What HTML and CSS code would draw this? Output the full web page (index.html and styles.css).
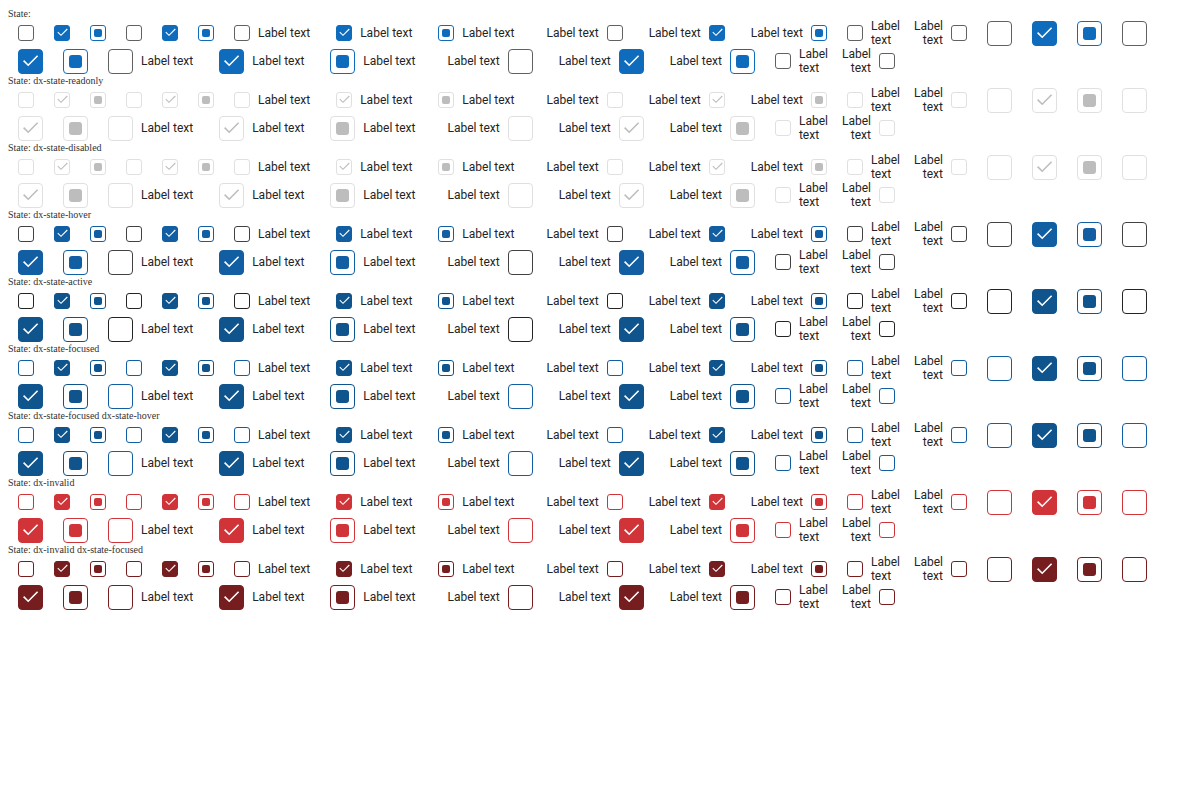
FILE: index.html
```html
<!DOCTYPE html>
<html lang="en">
<head>
  <meta charset="UTF-8">
  <title>CheckBox states</title>
  <link rel="stylesheet" href="styles.css">
</head>
<body>
  <div id="demo"></div>

  <script>
    // States shown, one block each
    var states = [
      { title: 'State:', cls: '' },
      { title: 'State: dx-state-readonly', cls: 'st-readonly' },
      { title: 'State: dx-state-disabled', cls: 'st-disabled' },
      { title: 'State: dx-state-hover', cls: 'st-hover' },
      { title: 'State: dx-state-active', cls: 'st-active' },
      { title: 'State: dx-state-focused', cls: 'st-focused' },
      { title: 'State: dx-state-focused dx-state-hover', cls: 'st-focused' },
      { title: 'State: dx-invalid', cls: 'st-invalid' },
      { title: 'State: dx-invalid dx-state-focused', cls: 'st-invalid-focused' }
    ];

    // size, value, label position
    var items = [
      ['sm', '', ''], ['sm', 'checked', ''], ['sm', 'indeterminate', ''],
      ['sm', '', ''], ['sm', 'checked', ''], ['sm', 'indeterminate', ''],
      ['sm', '', 'after'], ['sm', 'checked', 'after'], ['sm', 'indeterminate', 'after'],
      ['sm', '', 'before'], ['sm', 'checked', 'before'], ['sm', 'indeterminate', 'before'],
      ['sm', '', 'after wrap'], ['sm', '', 'before wrap'],
      ['lg', '', ''], ['lg', 'checked', ''], ['lg', 'indeterminate', ''],
      ['lg', '', ''], ['lg', 'checked', ''], ['lg', 'indeterminate', ''],
      ['lg', '', 'after'], ['lg', 'checked', 'after'], ['lg', 'indeterminate', 'after'],
      ['lg', '', 'before'], ['lg', 'checked', 'before'], ['lg', 'indeterminate', 'before'],
      ['sm', '', 'after wrap'], ['sm', '', 'before wrap']
    ];

    var checkSm = '<svg viewBox="0 0 16 16" width="16" height="16"><polyline points="3.8,7.2 7,10.3 13.3,4" /></svg>';
    var checkLg = '<svg viewBox="0 0 25 25" width="25" height="25"><polyline points="5.6,11.6 10.2,16.2 19.6,6.8" /></svg>';

    var html = '';
    states.forEach(function(s) {
      html += '<section class="state ' + s.cls + '">';
      html += '<div class="state-title">' + s.title + '</div>';
      html += '<div class="items">';
      items.forEach(function(it) {
        html += '<div class="cb ' + it[0] + ' ' + it[1] + ' ' + it[2] + '">';
        html += '<span class="box">';
        if (it[1] === 'checked') html += (it[0] === 'lg' ? checkLg : checkSm);
        html += '</span>';
        if (it[2]) html += '<span class="lbl">Label text</span>';
        html += '</div>';
      });
      html += '</div></section>';
    });
    document.getElementById('demo').innerHTML = html;
  </script>
</body>
</html>
```

FILE: styles.css
```css
/* Page */
body {
  margin: 8px;
  background: #fff;
}
.state-title {
  font-family: "Liberation Serif", serif;
  font-size: 10px;
  line-height: 11px;
  color: #333;
}
/* State colours */
.state {
  --border: #616161;
  --fill: #0f6cbd;
  --fill-border: #0f6cbd;
  --check: #fff;
  --mark: #0f6cbd;
  --mark-border: #0f6cbd;
}
.st-readonly, .st-disabled {
  --border: #e0e0e0;
  --fill: #fff;
  --fill-border: #e0e0e0;
  --check: #bdbdbd;
  --mark: #bdbdbd;
  --mark-border: #e0e0e0;
}
.st-hover {
  --border: #424242;
  --fill: #115ea3;
  --fill-border: #115ea3;
  --mark: #115ea3;
  --mark-border: #115ea3;
}
.st-active {
  --border: #242424;
  --fill: #0f548c;
  --fill-border: #0f548c;
  --mark: #0f548c;
  --mark-border: #0f548c;
}
.st-focused {
  --border: #115ea3;
  --fill: #0f548c;
  --fill-border: #0f548c;
  --mark: #0f548c;
  --mark-border: #0f548c;
}
.st-invalid {
  --border: #d13438;
  --fill: #d13438;
  --fill-border: #d13438;
  --mark: #d13438;
  --mark-border: #d13438;
}
.st-invalid-focused {
  --border: #751d1f;
  --fill: #751d1f;
  --fill-border: #751d1f;
  --mark: #751d1f;
  --mark-border: #751d1f;
}
/* Checkbox rows */
.items {
  display: flex;
  flex-wrap: wrap;
  align-items: center;
}
.cb {
  display: flex;
  align-items: center;
  margin: 0 10px;
  font-family: Roboto, sans-serif;
  font-size: 12px;
  line-height: 14px;
  color: #242424;
}
.cb.before {
  flex-direction: row-reverse;
}
.box {
  box-sizing: border-box;
  flex: none;
  display: flex;
  align-items: center;
  justify-content: center;
  position: relative;
  border: 1px solid var(--border);
  border-radius: 3px;
  background: #fff;
}
.sm .box {
  width: 16px;
  height: 16px;
}
.lg .box {
  width: 25px;
  height: 25px;
  border-radius: 4px;
}
.checked .box {
  background: var(--fill);
  border-color: var(--fill-border);
}
.box svg {
  position: absolute;
  left: -1px;
  top: -1px;
  fill: none;
  stroke: var(--check);
  stroke-width: 1.1;
}
.lg .box svg {
  stroke-width: 1.6;
}
.indeterminate .box {
  border-color: var(--mark-border);
}
.indeterminate .box::after {
  content: "";
  width: 8px;
  height: 8px;
  border-radius: 2px;
  background: var(--mark);
}
.lg.indeterminate .box::after {
  width: 13px;
  height: 13px;
  border-radius: 3px;
}
/* Labels */
.lbl {
  padding: 0 6px;
  margin-left: 2px;
  white-space: nowrap;
}
.before .lbl {
  margin-left: 0;
  margin-right: 2px;
}
.wrap .lbl {
  width: 20px;
  white-space: normal;
}
.before.wrap .lbl {
  direction: rtl;
}
```
